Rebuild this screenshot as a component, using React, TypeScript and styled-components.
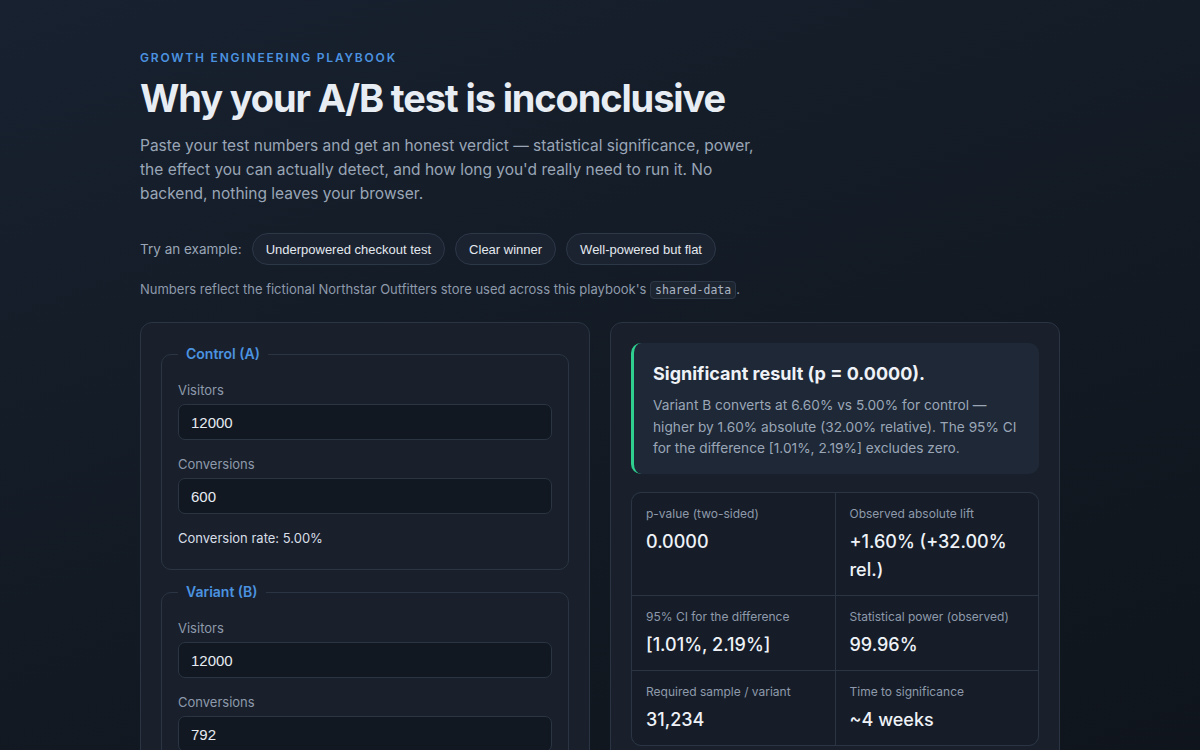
import styled, { createGlobalStyle } from "styled-components";

const GlobalStyle = createGlobalStyle`
  html, body {
    margin: 0;
    padding: 0;
  }
  body {
    min-height: 100vh;
    background: linear-gradient(160deg, #182130 0%, #121922 55%, #0f141b 100%);
    color: #e6ebf2;
    font-family: Inter, "Noto Sans", sans-serif;
  }
`;

const Page = styled.main`
  width: 920px;
  margin: 0 auto;
  padding: 50px 0 40px;
`;

const Eyebrow = styled.div`
  font-size: 12px;
  font-weight: 600;
  letter-spacing: 0.15em;
  text-transform: uppercase;
  color: #4b93e0;
  line-height: 16px;
`;

const Title = styled.h1`
  margin: 9px 0 0;
  font-size: 38px;
  line-height: 46px;
  font-weight: 700;
  letter-spacing: -0.03em;
  color: #e8edf4;
`;

const Lede = styled.p`
  margin: 13px 0 0;
  max-width: 620px;
  font-size: 15.5px;
  line-height: 24px;
  color: #9aa6b6;
`;

const ExampleRow = styled.div`
  display: flex;
  align-items: center;
  gap: 10px;
  margin-top: 27px;
  font-size: 13.5px;
  color: #9aa6b6;
`;

const Chip = styled.button`
  height: 32px;
  padding: 0 13px;
  border-radius: 16px;
  border: 1px solid #2c3747;
  background: #1b2330;
  color: #e3e8ef;
  font-family: "Liberation Sans", Arial, sans-serif;
  font-size: 13px;
  cursor: pointer;
`;

const Note = styled.p`
  margin: 15px 0 0;
  font-size: 13px;
  line-height: 18px;
  color: #8e9aab;
`;

const Code = styled.code`
  font-family: "DejaVu Sans Mono", "Liberation Mono", monospace;
  font-size: 11.5px;
  color: #aab4c2;
  background: #1d2531;
  border: 1px solid #2c3747;
  border-radius: 4px;
  padding: 1px 4px;
`;

const Columns = styled.div`
  display: grid;
  grid-template-columns: 1fr 1fr;
  gap: 20px;
  margin-top: 23px;
`;

const Panel = styled.section<{ $gap: number }>`
  background: #19202b;
  border: 1px solid #2a3443;
  border-radius: 12px;
  padding: 20px;
  display: flex;
  flex-direction: column;
  gap: ${p => p.$gap}px;
`;

const Group = styled.fieldset`
  margin: 0;
  border: 1px solid #2a3443;
  border-radius: 10px;
  padding: 0 16px 23px;
`;

const Legend = styled.legend`
  padding: 0 8px;
  margin-left: 0;
  font-size: 14px;
  line-height: 22px;
  font-weight: 600;
  color: #4b93e0;
`;

const Field = styled.label`
  display: flex;
  flex-direction: column;
  gap: 6px;
  margin-top: 16px;
  font-size: 13px;
  line-height: 16px;
  color: #8e9aab;
  &:first-of-type {
    margin-top: 17px;
  }
`;

const Input = styled.input`
  box-sizing: border-box;
  height: 36px;
  padding: 0 12px;
  border: 1px solid #2a3443;
  border-radius: 7px;
  background: #111821;
  color: #e6ebf2;
  font-family: "Liberation Sans", Arial, sans-serif;
  font-size: 15px;
  outline: none;
`;

const Rate = styled.div`
  margin-top: 16px;
  font-size: 13px;
  line-height: 16px;
  color: #d8dee7;
`;

const Verdict = styled.div`
  background: #1e2836;
  border-left: 3px solid #2fcf8f;
  border-radius: 10px;
  padding: 18px 22px 14px 19px;
`;

const VerdictTitle = styled.h2`
  margin: 0;
  font-size: 18px;
  line-height: 26px;
  font-weight: 700;
  color: #eef2f7;
`;

const VerdictText = styled.p`
  margin: 8px 0 0;
  font-size: 13.7px;
  line-height: 21.5px;
  color: #9aa6b6;
`;

const Stats = styled.div`
  display: grid;
  grid-template-columns: 1fr 1fr;
  gap: 1px;
  border: 1px solid #2a3443;
  border-radius: 10px;
  overflow: hidden;
  background-color: #2a3443;
`;

const Stat = styled.div`
  background: #161d28;
  padding: 13px 14px 11px;
`;

const StatLabel = styled.div`
  font-size: 12px;
  line-height: 16px;
  color: #8e9aab;
`;

const StatValue = styled.div`
  margin-top: 6px;
  font-size: 18px;
  line-height: 28px;
  font-weight: 500;
  color: #eef2f7;
`;

const examples = ["Underpowered checkout test", "Clear winner", "Well-powered but flat"];

const groups = [
  { name: "Control (A)", visitors: "12000", conversions: "600", rate: "5.00%" },
  { name: "Variant (B)", visitors: "12000", conversions: "792", rate: "6.60%" },
];

const stats = [
  { label: "p-value (two-sided)", value: "0.0000" },
  { label: "Observed absolute lift", value: "+1.60% (+32.00% rel.)" },
  { label: "95% CI for the difference", value: "[1.01%, 2.19%]" },
  { label: "Statistical power (observed)", value: "99.96%" },
  { label: "Required sample / variant", value: "31,234" },
  { label: "Time to significance", value: "~4 weeks" },
];

export default function App() {
  return (
    <>
      <GlobalStyle />
      <Page>
        <Eyebrow>Growth Engineering Playbook</Eyebrow>
        <Title>Why your A/B test is inconclusive</Title>
        <Lede>
          Paste your test numbers and get an honest verdict — statistical significance, power,
          the effect you can actually detect, and how long you'd really need to run it. No
          backend, nothing leaves your browser.
        </Lede>

        <ExampleRow>
          <span>Try an example:</span>
          {examples.map(e => (
            <Chip key={e}>{e}</Chip>
          ))}
        </ExampleRow>
        <Note>
          Numbers reflect the fictional Northstar Outfitters store used across this playbook's{" "}
          <Code>shared-data</Code>.
        </Note>

        <Columns>
          <Panel $gap={11}>
            {groups.map(g => (
              <Group key={g.name}>
                <Legend>{g.name}</Legend>
                <Field>
                  Visitors
                  <Input defaultValue={g.visitors} />
                </Field>
                <Field>
                  Conversions
                  <Input defaultValue={g.conversions} />
                </Field>
                <Rate>Conversion rate: {g.rate}</Rate>
              </Group>
            ))}
          </Panel>

          <Panel $gap={18}>
            <Verdict>
              <VerdictTitle>Significant result (p = 0.0000).</VerdictTitle>
              <VerdictText>
                Variant B converts at 6.60% vs 5.00% for control — higher by 1.60% absolute
                (32.00% relative). The 95% CI for the difference [1.01%, 2.19%] excludes zero.
              </VerdictText>
            </Verdict>
            <Stats>
              {stats.map(s => (
                <Stat key={s.label}>
                  <StatLabel>{s.label}</StatLabel>
                  <StatValue>{s.value}</StatValue>
                </Stat>
              ))}
            </Stats>
          </Panel>
        </Columns>
      </Page>
    </>
  );
}
